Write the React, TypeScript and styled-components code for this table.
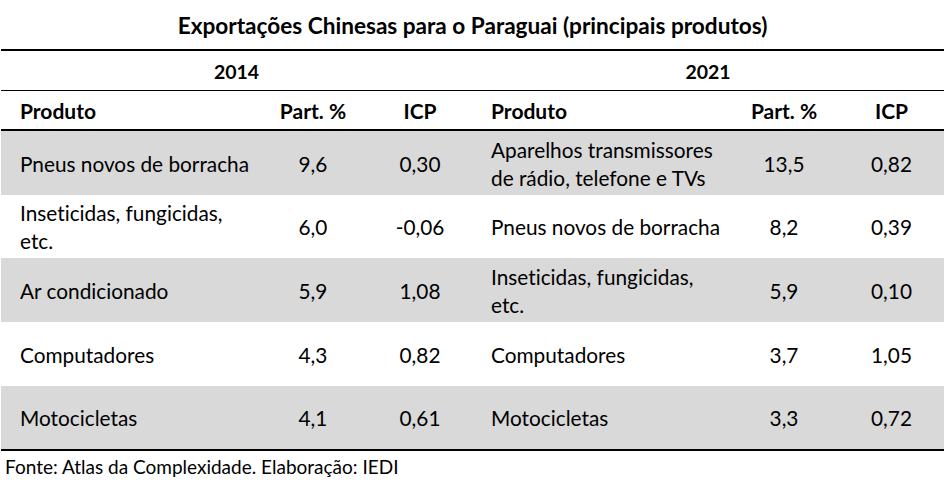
import React from "react";
import styled, { createGlobalStyle } from "styled-components";

const GlobalStyle = createGlobalStyle`
  html, body {
    margin: 0;
    padding: 0;
    background: #ffffff;
  }
  body {
    font-family: Lato, "Liberation Sans", sans-serif;
    font-variant-ligatures: none;
    color: #000000;
  }
`;

const Page = styled.div`
  width: 947px;
  height: 480px;
  overflow: hidden;
`;

const Title = styled.div`
  height: 49px;
  margin-left: 1px;
  width: 943px;
  display: flex;
  align-items: center;
  justify-content: center;
  padding-top: 1px;
  box-sizing: border-box;
  font-size: 22.6px;
  font-weight: 700;
`;

const Table = styled.table`
  margin-left: 1px;
  width: 943px;
  border-collapse: separate;
  border-spacing: 0;
  table-layout: fixed;
  border-top: 2px solid #000;
  border-bottom: 2px solid #000;
`;

const YearRow = styled.tr`
  height: 40px;
`;

const YearCell = styled.th`
  padding: 2px 0 0;
  border-bottom: 1px solid #000;
  font-size: 19.5px;
  font-weight: 700;
  text-align: center;
`;

const HeadRow = styled.tr`
  height: 40px;
`;

const HeadCell = styled.th<{ $left?: boolean }>`
  padding: 0 0 0 ${(p) => (p.$left ? "19px" : "0")};
  border-bottom: 2px solid #000;
  font-size: 21px;
  font-weight: 700;
  text-align: ${(p) => (p.$left ? "left" : "center")};
`;

const DataRow = styled.tr<{ $shaded: boolean; $h: number }>`
  height: ${(p) => p.$h}px;
  background: ${(p) => (p.$shaded ? "#d9d9d9" : "#ffffff")};
`;

const Cell = styled.td<{ $left?: boolean }>`
  padding: 1px 0 0 ${(p) => (p.$left ? "19px" : "0")};
  font-size: 20.8px;
  line-height: 28px;
  text-align: ${(p) => (p.$left ? "left" : "center")};
  vertical-align: middle;
`;

const Source = styled.div`
  padding: 4px 0 0 5px;
  font-size: 19px;
`;

type Item = { name: string; part: string; icp: string };

const left: Item[] = [
  { name: "Pneus novos de borracha", part: "9,6", icp: "0,30" },
  { name: "Inseticidas, fungicidas, etc.", part: "6,0", icp: "-0,06" },
  { name: "Ar condicionado", part: "5,9", icp: "1,08" },
  { name: "Computadores", part: "4,3", icp: "0,82" },
  { name: "Motocicletas", part: "4,1", icp: "0,61" },
];

const right: Item[] = [
  { name: "Aparelhos transmissores de rádio, telefone e TVs", part: "13,5", icp: "0,82" },
  { name: "Pneus novos de borracha", part: "8,2", icp: "0,39" },
  { name: "Inseticidas, fungicidas, etc.", part: "5,9", icp: "0,10" },
  { name: "Computadores", part: "3,7", icp: "1,05" },
  { name: "Motocicletas", part: "3,3", icp: "0,72" },
];

const rowHeights = [64, 63, 64, 64, 63];

export default function App() {
  return (
    <Page>
      <GlobalStyle />
      <Title>Exportações Chinesas para o Paraguai (principais produtos)</Title>
      <Table>
        <colgroup>
          <col style={{ width: 257 }} />
          <col style={{ width: 110 }} />
          <col style={{ width: 104 }} />
          <col style={{ width: 257 }} />
          <col style={{ width: 110 }} />
          <col style={{ width: 105 }} />
        </colgroup>
        <thead>
          <YearRow>
            <YearCell colSpan={3}>2014</YearCell>
            <YearCell colSpan={3}>2021</YearCell>
          </YearRow>
          <HeadRow>
            <HeadCell $left>Produto</HeadCell>
            <HeadCell>Part. %</HeadCell>
            <HeadCell>ICP</HeadCell>
            <HeadCell $left>Produto</HeadCell>
            <HeadCell>Part. %</HeadCell>
            <HeadCell>ICP</HeadCell>
          </HeadRow>
        </thead>
        <tbody>
          {left.map((l, i) => {
            const r = right[i];
            return (
              <DataRow key={i} $shaded={i % 2 === 0} $h={rowHeights[i]}>
                <Cell $left>{l.name}</Cell>
                <Cell>{l.part}</Cell>
                <Cell>{l.icp}</Cell>
                <Cell $left>{r.name}</Cell>
                <Cell>{r.part}</Cell>
                <Cell>{r.icp}</Cell>
              </DataRow>
            );
          })}
        </tbody>
      </Table>
      <Source>Fonte: Atlas da Complexidade. Elaboração: IEDI</Source>
    </Page>
  );
}
